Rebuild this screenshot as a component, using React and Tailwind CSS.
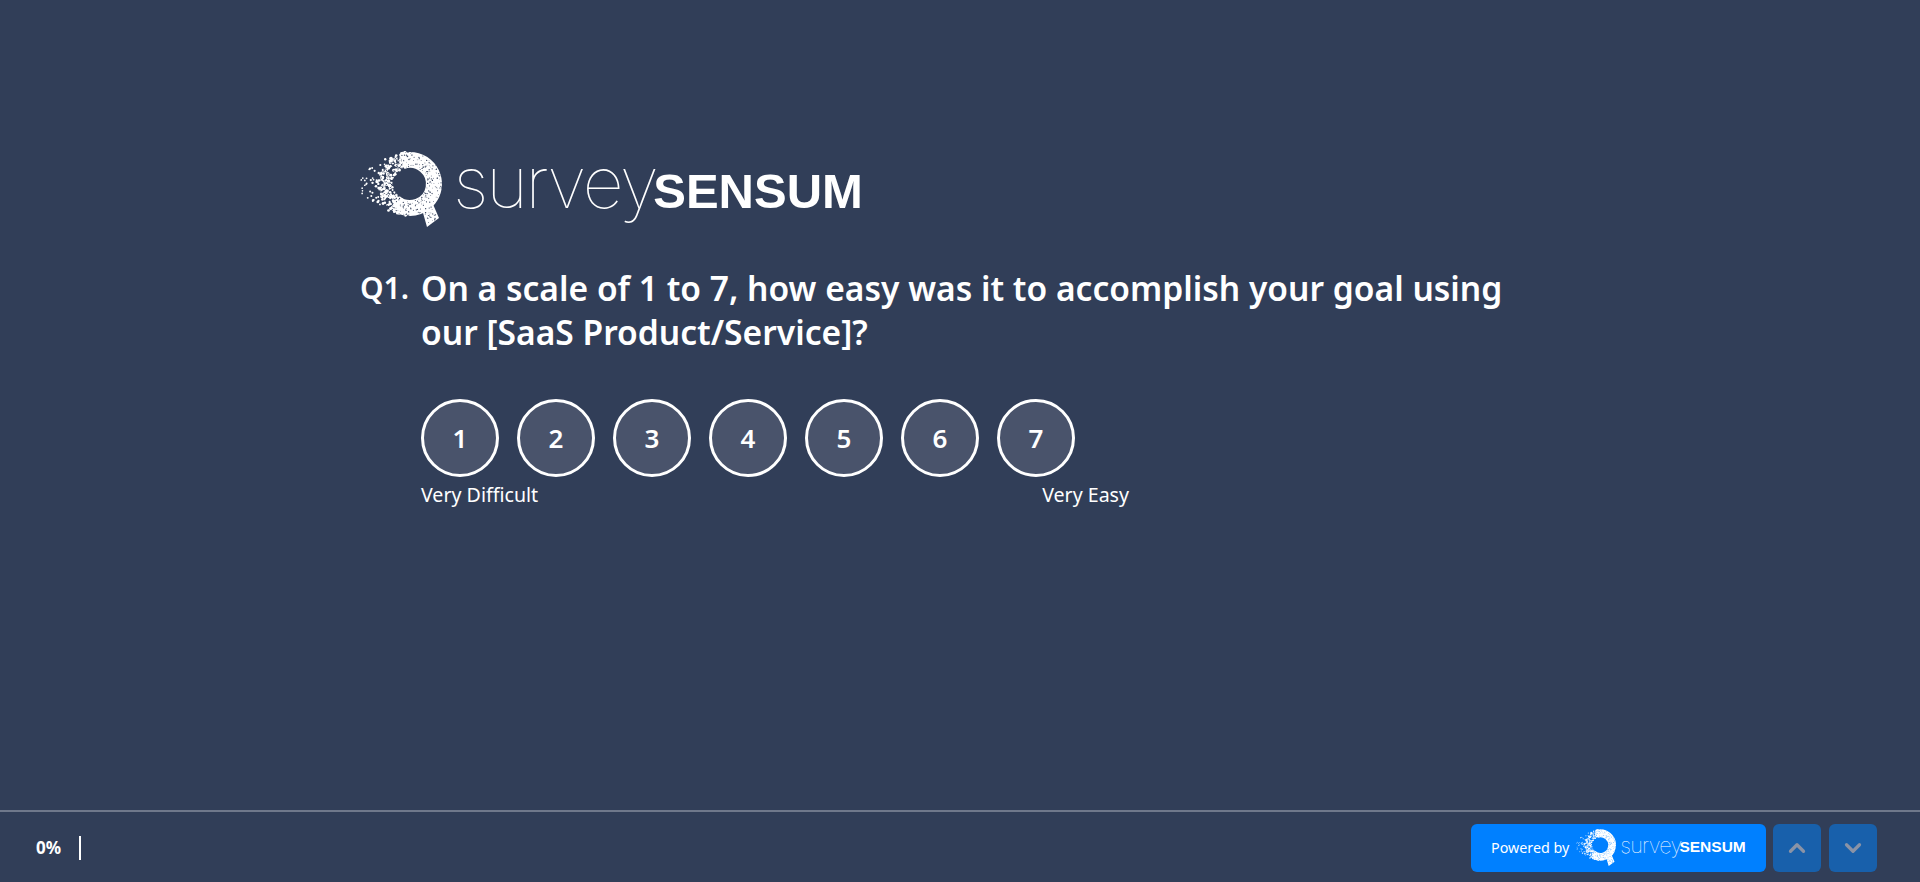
import { ChevronDown, ChevronUp } from "lucide-react";

// small seeded random so the speckles of the logo stay the same between renders
function makeRandom(seed) {
  let s = seed;
  return () => {
    s = (s * 16807) % 2147483647;
    return (s - 1) / 2147483646;
  };
}

function buildDots() {
  const rand = makeRandom(4711);
  const white = [];
  const dark = [];
  // ring, dots only on the left part where it dissolves
  for (let i = 0; i < 520; i++) {
    const a = rand() * Math.PI * 2;
    const r = 17 + rand() * 15;
    const x = 50 + Math.cos(a) * r;
    const y = 33 + Math.sin(a) * r;
    if (x < 46) white.push([x, y, 0.8 + rand() * 0.8]);
  }
  // particles flying off to the left
  for (let i = 0; i < 75; i++) {
    const x = 1 + rand() * 30;
    const y = 33 + (rand() - 0.5) * (20 + x * 1.2);
    white.push([x, y, 0.5 + (x / 30) * rand() + 0.3]);
  }
  // dark specks on the solid part
  for (let i = 0; i < 280; i++) {
    const a = rand() * Math.PI * 2;
    const r = 17 + rand() * 15;
    dark.push([50 + Math.cos(a) * r, 33 + Math.sin(a) * r, 0.3 + rand() * 0.4]);
  }
  for (let i = 0; i < 22; i++) {
    dark.push([64 + rand() * 12, 58 + rand() * 14, 0.3 + rand() * 0.4]);
  }
  return { white, dark };
}

const dots = buildDots();

function QMark({ className, bg }) {
  return (
    <svg viewBox="0 0 84 78" className={className} aria-hidden="true">
      <path d="M41.8 10.4 A24 24 0 1 1 34.6 51.4" fill="none" stroke="#fff" strokeWidth="16" />
      <polygon points="61.7,57.3 73.3,54 79,67 67,76" fill="#fff" />
      {dots.white.map(([x, y, r], i) => (
        <circle key={i} cx={x} cy={y} r={r} fill="#fff" />
      ))}
      {dots.dark.map(([x, y, r], i) => (
        <circle key={i} cx={x} cy={y} r={r} fill={bg} />
      ))}
    </svg>
  );
}

function App() {
  const scale = [1, 2, 3, 4, 5, 6, 7];

  return (
    <div className="h-screen flex flex-col bg-[#313e58] text-white font-['Noto_Sans',sans-serif]">
      <main className="flex-1 pl-[360px] pt-[151px]">
        <div className="flex items-start h-[78px]">
          <QMark className="w-[84px] h-[78px]" bg="#313e58" />
          <div className="flex items-baseline ml-[9px] mt-[-11px] leading-[84px]">
            <span className="font-['Inter',sans-serif] font-thin text-[72px] tracking-[-2.6px]">survey</span>
            <span className="font-['Liberation_Sans',sans-serif] font-bold text-[49px] ml-[-3px]">SENSUM</span>
          </div>
        </div>

        <div className="flex mt-[37px] text-[33.6px] leading-[44px] font-semibold">
          <div className="w-[61px] text-[30px]">Q1.</div>
          <div className="w-[1150px]">
            On a scale of 1 to 7, how easy was it to accomplish your goal using
            <br />
            our [SaaS Product/Service]?
          </div>
        </div>

        <div className="ml-[61px] mt-[45px] w-[708px]">
          <div className="flex gap-[18px]">
            {scale.map((n) => (
              <button
                key={n}
                className="w-[78px] h-[78px] rounded-full border-[3px] border-white bg-[#49536b] text-[26px] font-semibold flex items-center justify-center"
              >
                {n}
              </button>
            ))}
          </div>
          <div className="flex justify-between mt-[4px] text-[19.6px] leading-[28px]">
            <span>Very Difficult</span>
            <span>Very Easy</span>
          </div>
        </div>
      </main>

      <footer className="h-[72px] border-t-2 border-[#6f788b] flex items-center justify-between pl-[36px] pr-[43px] pt-[2px]">
        <div className="flex items-center">
          <span className="w-[43px] text-[17px] font-bold">0%</span>
          <span className="w-[2px] h-[24px] bg-white"></span>
        </div>
        <div className="flex items-center gap-[8px]">
          <div className="w-[295px] h-[48px] mr-[-1px] rounded-[6px] bg-[#0080ff] flex items-center pl-[20px]">
            <span className="text-[14.3px]">Powered by</span>
            <QMark className="w-[41px] h-[38px] ml-[7px]" bg="#0080ff" />
            <span className="font-['Inter',sans-serif] font-thin text-[21.7px] tracking-[-0.8px] ml-[3px] mt-[-5px]">survey</span>
            <span className="font-['Liberation_Sans',sans-serif] font-bold text-[15.5px] ml-[-2px] mt-[-3px]">SENSUM</span>
          </div>
          <button className="w-[48px] h-[48px] rounded-[6px] bg-[#1860ab] flex items-center justify-center text-[#8a93a6]">
            <ChevronUp size={26} strokeWidth={3} />
          </button>
          <button className="w-[48px] h-[48px] rounded-[6px] bg-[#1860ab] flex items-center justify-center text-[#8a93a6]">
            <ChevronDown size={26} strokeWidth={3} />
          </button>
        </div>
      </footer>
    </div>
  );
}

export default App;
